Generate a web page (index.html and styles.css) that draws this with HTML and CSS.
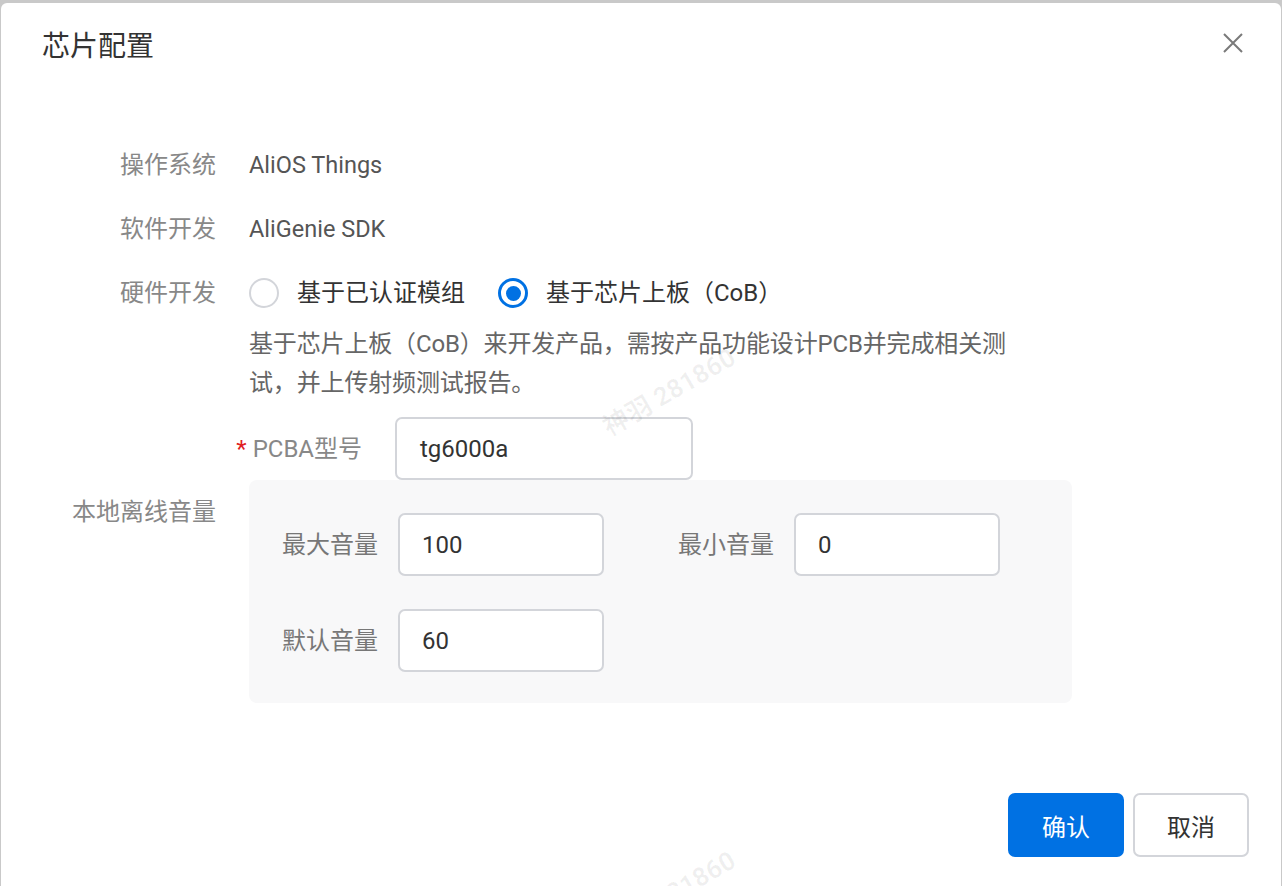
FILE: index.html
```html
<!DOCTYPE html>
<html lang="zh-CN">
<head>
<meta charset="utf-8">
<title>芯片配置</title>
<link rel="stylesheet" href="styles.css">
</head>
<body>
<div class="dialog">
  <div class="header">
    <div class="title">芯片配置</div>
    <svg class="close" width="20" height="20" viewBox="0 0 20 20"><path d="M1 1L19 19M19 1L1 19" stroke="#7a7a7a" stroke-width="2" fill="none"/></svg>
  </div>
  <div class="body">
    <div class="form-row gap24">
      <div class="form-label">操作系统</div>
      <div class="form-content value">AliOS Things</div>
    </div>
    <div class="form-row gap24">
      <div class="form-label">软件开发</div>
      <div class="form-content value">AliGenie SDK</div>
    </div>
    <div class="form-row">
      <div class="form-label">硬件开发</div>
      <div class="form-content">
        <div class="radio-group">
          <label class="radio"><span class="radio-dot"></span><span>基于已认证模组</span></label>
          <label class="radio checked"><span class="radio-dot"></span><span>基于芯片上板（CoB）</span></label>
        </div>
        <div class="desc">基于芯片上板（CoB）来开发产品，需按产品功能设计PCB并完成相关测试，并上传射频测试报告。</div>
        <div class="sub-row">
          <div class="sub-label"><span class="req">*</span>PCBA型号</div>
          <div class="input wide">tg6000a</div>
        </div>
      </div>
    </div>
    <div class="form-row">
      <div class="form-label tall">本地离线音量</div>
      <div class="form-content">
        <div class="volume-box">
          <div class="vol-item"><span class="vol-label">最大音量</span><div class="input small">100</div></div>
          <div class="vol-item"><span class="vol-label">最小音量</span><div class="input small">0</div></div>
          <div class="vol-item"><span class="vol-label">默认音量</span><div class="input small">60</div></div>
        </div>
      </div>
    </div>
  </div>
  <div class="footer">
    <button class="btn primary">确认</button>
    <button class="btn">取消</button>
  </div>
  <span class="watermark wm1">神羽 281860</span>
  <span class="watermark wm2">神羽 281860</span>
</div>
</body>
</html>
```
FILE: styles.css
```css
html, body {
  margin: 0;
  padding: 0;
}
body {
  background: #c9c9c9;
  height: 886px;
  overflow: hidden;
  font-family: Roboto, "Noto Sans CJK SC", sans-serif;
  font-size: 24px;
  color: #333;
}
.dialog {
  position: relative;
  margin: 3px 1px 0 1px;
  height: 883px;
  background: #fff;
  border-radius: 6px 6px 0 0;
  overflow: hidden;
}
.header {
  display: flex;
  justify-content: space-between;
  align-items: flex-start;
  padding: 26px 38px 0 41px;
}
.title {
  font-size: 28px;
  line-height: 36px;
  color: #333;
}
.close {
  margin-top: 4px;
  display: block;
}
.body {
  padding: 80px 0 0 41px;
}
.form-row {
  display: flex;
  align-items: flex-start;
}
.gap24 { margin-bottom: 24px; }
.form-label {
  width: 174px;
  flex-shrink: 0;
  margin-right: 33px;
  text-align: right;
  line-height: 40px;
  color: #888;
}
.form-label.tall {
  line-height: 64px;
}
.form-content {
  line-height: 40px;
}
.value {
  color: #555;
  font-size: 23.5px;
}
.radio-group {
  display: flex;
  align-items: center;
  height: 40px;
}
.radio {
  display: flex;
  align-items: center;
  color: #333;
  margin-right: 33px;
}
.radio-dot {
  width: 30px;
  height: 30px;
  box-sizing: border-box;
  border: 2px solid #d3d5da;
  border-radius: 50%;
  margin-right: 18px;
  display: flex;
  align-items: center;
  justify-content: center;
  background: #fff;
}
.radio.checked .radio-dot {
  border: 3px solid #0071e3;
}
.radio.checked .radio-dot::after {
  content: "";
  width: 15px;
  height: 15px;
  border-radius: 50%;
  background: #0071e3;
}
.desc {
  width: 764px;
  margin-top: 12px;
  line-height: 39px;
  color: #666;
  letter-spacing: -0.15px;
}
.sub-row {
  display: flex;
  align-items: center;
  margin-top: 14px;
  margin-left: -30px;
}
.sub-label {
  width: 143px;
  flex-shrink: 0;
  margin-right: 33px;
  display: flex;
  justify-content: flex-end;
  align-items: center;
  white-space: nowrap;
  color: #888;
}
.req {
  color: #e0201e;
  margin-right: 6px;
}
.input {
  box-sizing: border-box;
  height: 63px;
  border: 2px solid #d3d5da;
  border-radius: 7px;
  background: #fff;
  display: flex;
  align-items: center;
  color: #333;
}
.input.wide {
  width: 298px;
  padding-left: 23px;
}
.input.small {
  width: 206px;
  padding-left: 22px;
}
.volume-box {
  width: 823px;
  box-sizing: border-box;
  padding: 33px 0 31px 33px;
  background: #f8f8f9;
  border-radius: 8px;
  display: grid;
  grid-template-columns: 322px 322px;
  column-gap: 74px;
  row-gap: 33px;
}
.vol-item {
  display: flex;
  align-items: center;
}
.vol-label {
  color: #777;
  margin-right: 20px;
}
.footer {
  display: flex;
  justify-content: flex-end;
  gap: 9px;
  padding-right: 32px;
  margin-top: 90px;
}
.btn {
  width: 116px;
  height: 64px;
  box-sizing: border-box;
  border: 2px solid #d3d5da;
  border-radius: 7px;
  background: #fff;
  font-family: Roboto, "Noto Sans CJK SC", sans-serif;
  font-size: 24px;
  color: #333;
  padding: 0;
}
.btn.primary {
  background: #0071e3;
  border-color: #0071e3;
  color: #fff;
}
.watermark {
  position: absolute;
  font-size: 26px;
  font-weight: 700;
  color: rgba(0, 0, 0, 0.06);
  white-space: nowrap;
  transform: rotate(-30deg);
  transform-origin: center;
  width: 170px;
  text-align: center;
  line-height: 32px;
  pointer-events: none;
}
.wm1 { left: 583px; top: 373px; }
.wm2 { left: 583px; top: 876px; }
```
